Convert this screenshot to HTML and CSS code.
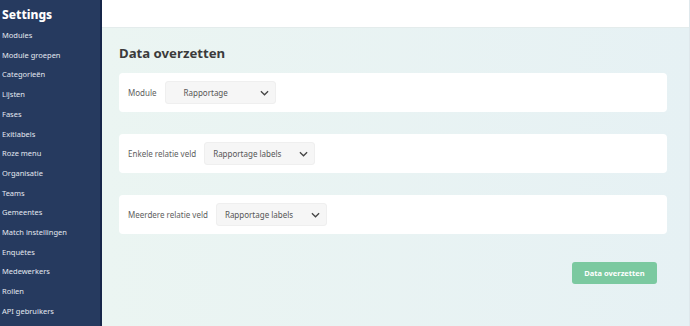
FILE: index.html
```html
<!DOCTYPE html>
<html lang="nl">
<head>
    <meta charset="UTF-8">
    <meta name="viewport" content="width=device-width, initial-scale=1.0">
    <title>Data overzetten</title>
    <link rel="stylesheet" href="styles.css">
</head>
<body>
    <aside class="sidebar">
        <h2>Settings</h2>
        <ul>
            <li>Modules</li>
            <li>Module groepen</li>
            <li>Categorieën</li>
            <li>Lijsten</li>
            <li>Fases</li>
            <li>Exitlabels</li>
            <li>Roze menu</li>
            <li>Organisatie</li>
            <li>Teams</li>
            <li>Gemeentes</li>
            <li>Match instellingen</li>
            <li>Enquêtes</li>
            <li>Medewerkers</li>
            <li>Rollen</li>
            <li>API gebruikers</li>
        </ul>
    </aside>
    <div class="page">
        <header class="topbar"></header>
        <main class="content">
            <h1>Data overzetten</h1>
            <div class="card">
                <span class="label">Module</span>
                <div class="select center">
                    <span>Rapportage</span>
                    <svg viewBox="0 0 10 6" width="9" height="6"><path d="M1 1l4 4 4-4" fill="none" stroke="#444" stroke-width="1.4"/></svg>
                </div>
            </div>
            <div class="card">
                <span class="label">Enkele relatie veld</span>
                <div class="select">
                    <span>Rapportage labels</span>
                    <svg viewBox="0 0 10 6" width="9" height="6"><path d="M1 1l4 4 4-4" fill="none" stroke="#444" stroke-width="1.4"/></svg>
                </div>
            </div>
            <div class="card">
                <span class="label">Meerdere relatie veld</span>
                <div class="select">
                    <span>Rapportage labels</span>
                    <svg viewBox="0 0 10 6" width="9" height="6"><path d="M1 1l4 4 4-4" fill="none" stroke="#444" stroke-width="1.4"/></svg>
                </div>
            </div>
            <div class="actions">
                <button class="btn">Data overzetten</button>
            </div>
        </main>
    </div>
</body>
</html>
```

FILE: styles.css
```css
body {
    margin: 0;
    font-family: "Noto Sans", "Open Sans", sans-serif;
    display: flex;
    height: 326px;
    overflow: hidden;
}
.sidebar {
    width: 100px;
    background: #263a5f;
    border-right: 2px solid #17264a;
    color: #e4e8f0;
    flex-shrink: 0;
}
.sidebar h2 {
    margin: 7px 0 0 2px;
    font-size: 12px;
    font-weight: 800;
    color: #fff;
    line-height: 16px;
}
.sidebar ul {
    list-style: none;
    margin: 3px 0 0;
    padding: 0 0 0 2px;
}
.sidebar li {
    font-size: 7.5px;
    line-height: 19.7px;
}
.page {
    flex: 1;
    display: flex;
    flex-direction: column;
    border-right: 1px solid #dfe8ec;
}
.topbar {
    height: 27px;
    background: #fff;
    border-bottom: 1px solid #e4ecec;
}
.content {
    flex: 1;
    background: linear-gradient(90deg, #ebf5f2, #e6f1f4);
    padding: 16px 22px 0 17px;
}
h1 {
    margin: 0 0 11px;
    font-size: 13.2px;
    font-weight: 700;
    color: #3b3b3b;
    line-height: 18px;
}
.card {
    background: #fff;
    border-radius: 4px;
    height: 39px;
    display: flex;
    align-items: center;
    padding: 0 9px;
    margin-bottom: 22px;
}
.label {
    font-size: 8px;
    color: #5e5e5e;
    margin-right: 8px;
}
.select {
    width: 111px;
    height: 23px;
    box-sizing: border-box;
    background: #f6f6f6;
    border: 1px solid #efefef;
    border-radius: 3px;
    display: flex;
    align-items: center;
    justify-content: space-between;
    padding: 0 6px 0 8px;
    font-size: 8px;
    color: #555;
}
.select.center span {
    margin-left: 10px;
}
.actions {
    display: flex;
    justify-content: flex-end;
    padding-right: 10px;
    margin-top: 28px;
}
.btn {
    background: #7bc9a0;
    color: #fff;
    border: none;
    border-radius: 3px;
    font-family: inherit;
    font-size: 7.5px;
    font-weight: 700;
    width: 85px;
    height: 22px;
    padding: 0;
}
```
